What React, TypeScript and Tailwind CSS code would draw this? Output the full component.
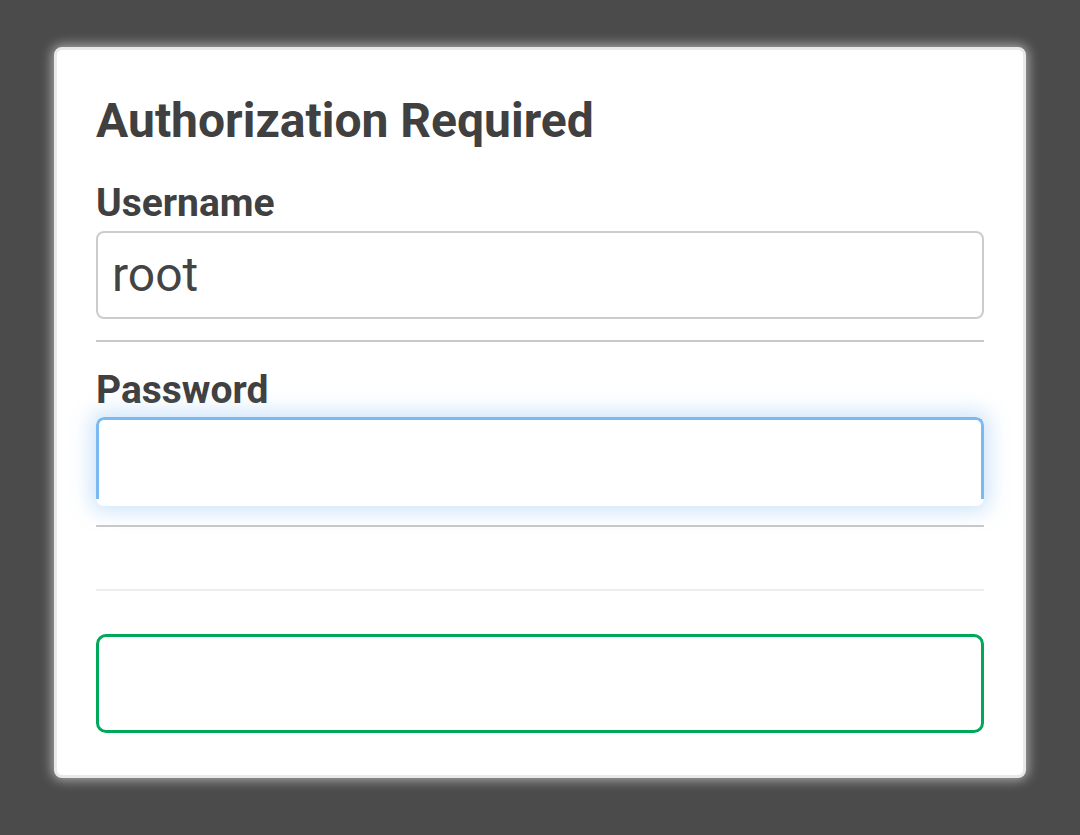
import React from "react";

export default function App() {
  return (
    <div
      className="w-full h-[835px] bg-[#4b4b4b] pt-[47px] pl-[54px]"
      style={{ fontFamily: "Roboto, 'Noto Sans', sans-serif" }}
    >
      <div className="w-[972px] h-[731px] bg-white border-[3px] border-[#e9e9e9] rounded-[8px] shadow-[0_0_12px_2px_rgba(255,255,255,0.55)] px-[39px] pt-[43px] flex flex-col">
        <h1 className="text-[48px] leading-[56px] font-bold text-[#404040]">Authorization Required</h1>

        <label className="mt-[32px] text-[39px] leading-[44px] font-bold text-[#404040]">Username</label>
        <div className="mt-[6px] h-[88px] border-2 border-[#cccccc] rounded-[8px] flex items-center pl-[14px]">
          <span className="text-[48px] leading-[56px] text-[#444444]">root</span>
        </div>
        <div className="mt-[21px] h-[2px] bg-[#c8c8c8]" />

        <label className="mt-[26px] text-[39px] leading-[44px] font-bold text-[#404040]">Password</label>
        <div className="mt-[5px] h-[89px] rounded-[8px] bg-white overflow-hidden shadow-[0_0_20px_6px_rgba(120,180,240,0.35)]">
          <div className="h-[82px] border-[3px] border-b-0 border-[#7ab9f2] rounded-t-[8px]" />
        </div>
        <div className="mt-[19px] h-[2px] bg-[#c8c8c8]" />

        <div className="mt-[62px] h-[2px] bg-[#ececec]" />

        <div className="mt-[43px] h-[99px] border-[3px] border-[#00a85a] rounded-[10px]" />
      </div>
    </div>
  );
}
